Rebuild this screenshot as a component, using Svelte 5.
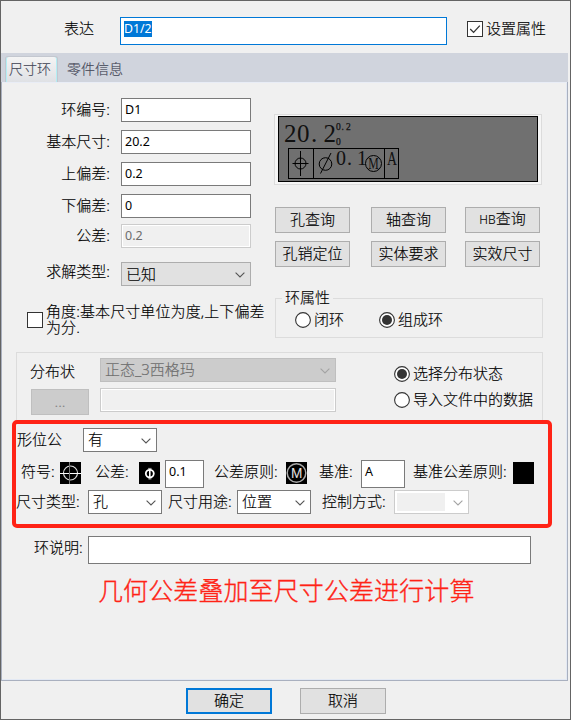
<script>
  const fields = [
    { label: '环编号:', value: 'D1', gap: 0 },
    { label: '基本尺寸:', value: '20.2', gap: 8 },
    { label: '上偏差:', value: '0.2', gap: 8 },
    { label: '下偏差:', value: '0', gap: 8 },
    { label: '公差:', value: '0.2', gap: 6, disabled: true }
  ];
  const actions = ['孔查询', '轴查询', 'HB查询', '孔销定位', '实体要求', '实效尺寸'];
</script>

{#snippet chevron()}
  <svg class="chev" width="10" height="6" viewBox="0 0 10 6"><path d="M0.6 0.6 L5 5 L9.4 0.6" fill="none" stroke="currentColor" stroke-width="1.1" /></svg>
{/snippet}

{#snippet radio(label, on)}
  <span class="radio">
    <svg width="16" height="16" viewBox="0 0 16 16">
      <circle cx="8" cy="8" r="7.4" fill="#fff" stroke="#333" stroke-width="1.1" />
      {#if on}<circle cx="8" cy="8" r="5" fill="#333" />{/if}
    </svg>
    <span>{label}</span>
  </span>
{/snippet}

<div class="window">
  <header class="top">
    <span class="expr">表达</span>
    <div class="input focus"><span class="sel">D1/2</span></div>
    <span class="check">
      <svg width="14" height="14" viewBox="0 0 14 14"><path d="M2.2 7 L5.6 10.4 L11.8 3.6" fill="none" stroke="#333" stroke-width="1.3" /></svg>
    </span>
    <span class="setattr">设置属性</span>
  </header>

  <nav class="tabs">
    <span class="tab active">尺寸环</span>
    <span class="tab">零件信息</span>
  </nav>

  <main class="panel">
    <div class="cols">
      <section class="left">
        {#each fields as f}
          <div class="field" style="margin-top:{f.gap}px">
            <span class="lbl">{f.label}</span>
            <div class="input" class:disabled={f.disabled}>{f.value}</div>
          </div>
        {/each}
        <div class="field solve">
          <span class="lbl">求解类型:</span>
          <div class="select gray">已知{@render chevron()}</div>
        </div>
        <div class="angle">
          <span class="check"></span>
          <span class="note">角度:基本尺寸单位为度,上下偏差<br />为分.</span>
        </div>
      </section>

      <section class="right">
        <div class="frame">
          <svg width="260" height="66" viewBox="278 116 260 66">
            <rect x="278.5" y="116.5" width="259" height="65" fill="#707070" stroke="#000" />
            <g class="cad">
              <text x="284 297 311 323.5" y="141.5" font-size="25">20.2</text>
              <text class="small" x="336 341.5 346" y="130" font-size="9.5">0.2</text>
              <text class="small" x="336" y="145" font-size="9.5">0</text>
              <text x="336 347 357" y="165" font-size="20">0.1</text>
              <text class="m" x="368.2" y="169" font-size="16" textLength="10.5" lengthAdjust="spacingAndGlyphs">M</text>
              <text x="387" y="165" font-size="19" textLength="10" lengthAdjust="spacingAndGlyphs">A</text>
            </g>
            <g fill="none" stroke="#000">
              <rect x="288.5" y="148.5" width="110" height="30" />
              <path d="M313.5 148V179M384.5 148V179M292.5 163.5H308.5M300.5 151V176M320.5 173.5L331 153" />
              <circle cx="300.5" cy="163.5" r="5.5" />
              <circle cx="325.5" cy="164" r="6.3" />
              <circle cx="373.5" cy="163.5" r="8" />
            </g>
          </svg>
        </div>
        <div class="actions">
          {#each actions as a}
            <button>{#if a.startsWith('HB')}<small>HB</small>{a.slice(2)}{:else}{a}{/if}</button>
          {/each}
        </div>
        <div class="ringattr">
          <span class="legend">环属性</span>
          {@render radio('闭环', false)}
          {@render radio('组成环', true)}
        </div>
      </section>
    </div>

    <section class="dist">
      <span class="dlabel">分布状</span>
      <div class="select off">正态_3西格玛{@render chevron()}</div>
      {@render radio('选择分布状态', true)}
      <button class="browse">...</button>
      <div class="input disabled"></div>
      {@render radio('导入文件中的数据', false)}
    </section>

    <section class="geo">
      <div class="row r1">
        <span class="w66">形位公</span>
        <div class="select">有{@render chevron()}</div>
      </div>
      <div class="row r2">
        <span class="w39">符号:</span>
        <svg class="ico" width="21" height="22" viewBox="0 0 21 22">
          <rect width="21" height="22" fill="#000" />
          <circle cx="10.5" cy="11" r="7" fill="none" stroke="#ddd" stroke-width="1.1" />
          <path d="M0 11.5H21" stroke="#fff" />
          <path d="M9.5 0V22" stroke="#777" />
        </svg>
        <span class="w43 ml15">公差:</span>
        <svg class="ico" width="21" height="22" viewBox="0 0 21 22">
          <rect width="21" height="22" fill="#000" />
          <ellipse cx="10.8" cy="11.6" rx="4" ry="3.8" fill="none" stroke="#fff" stroke-width="1.8" />
          <path d="M10.8 6V17.2" stroke="#fff" stroke-width="1.6" />
          <path d="M9 6.4H12.6M9 16.8H12.6" stroke="#999" />
        </svg>
        <div class="input v39">0.1</div>
        <span class="w71 ml11">公差原则:</span>
        <svg class="ico" width="21" height="22" viewBox="0 0 21 22">
          <rect width="21" height="22" fill="#000" />
          <circle cx="10.5" cy="11" r="9.3" fill="none" stroke="#aaa" stroke-width="1.5" />
          <text x="4.9" y="16.2" font-family="Liberation Sans" font-size="14" font-weight="400" fill="#e4e4e4" textLength="11.4" lengthAdjust="spacingAndGlyphs">M</text>
        </svg>
        <span class="w42 ml12">基准:</span>
        <div class="input v44">A</div>
        <span class="w100 ml8">基准公差原则:</span>
        <svg class="ico" width="21" height="22"><rect width="21" height="22" fill="#000" /></svg>
      </div>
      <div class="row r3">
        <span class="w72">尺寸类型:</span>
        <div class="select">孔{@render chevron()}</div>
        <span class="w69 ml6">尺寸用途:</span>
        <div class="select">位置{@render chevron()}</div>
        <span class="w72 ml11">控制方式:</span>
        <div class="select none"><i></i>{@render chevron()}</div>
      </div>
    </section>

    <div class="desc">
      <span>环说明:</span>
      <div class="input"></div>
    </div>
    <p class="caption">几何公差叠加至尺寸公差进行计算</p>
  </main>

  <footer>
    <button class="primary">确定</button>
    <button>取消</button>
  </footer>
</div>

<style>
  :global(body) { margin: 0; }
  .window, .window * { box-sizing: border-box; }
  .window {
    width: 571px; height: 720px; border: 1px solid #646464; background: #f0f0f0;
    font: 300 15px/16px 'Noto Sans', 'Noto Sans CJK SC', sans-serif; color: #000;
    -webkit-text-stroke: 0.15px currentColor;
    white-space: nowrap; overflow: hidden;
  }
  svg { display: block; flex: none; }
  .input, .select, button, .check { flex: none; }

  .input {
    height: 24px; border: 1px solid #7a7a7a; background: #fff; padding: 3px 3px;
    font: 400 12.5px/16px 'Noto Sans', sans-serif; -webkit-text-stroke: 0;
  }
  .input.disabled { border-color: #ccc; background: #f0f0f0; color: #6d6d6d; box-shadow: inset 0 0 0 1px #fff; }
  .select {
    height: 24px; width: 74px; border: 1px solid #7a7a7a; background: #fff; padding: 0 5px 3px 4px;
    display: flex; align-items: center; justify-content: space-between; color: #000;
  }
  .chev { color: #555; position: relative; top: 2px; }
  .select.gray { width: 130px; background: #e1e1e1; border-color: #adadad; padding-bottom: 1px; }
  .select.gray .chev { top: 1px; }
  .select.off { background: #ccc; border-color: #bfbfbf; color: #6d6d6d; padding-bottom: 2px; }
  .select.off .chev, .select.none .chev { color: #a3a3a3; }
  .select.none { width: 75px; border-color: #ccc; padding: 0 5px 0 2px; }
  .select.none i { width: 48px; height: 18px; background: #f0f0f0; }
  .select.none .chev { top: 1px; }
  button {
    font: inherit; color: #000; background: #e1e1e1; border: 1px solid #adadad; border-radius: 0;
    width: 75px; height: 26px; padding: 0 0 2px; margin: 0;
  }
  button small { font-size: 12px; }
  .check { width: 16px; height: 16px; border: 1px solid #333; background: #fff; }
  .radio { display: flex; align-items: center; gap: 3px; height: 16px; }
  .radio span { position: relative; top: -1px; }

  .top { height: 52px; display: flex; padding: 16px 0 0 63px; }
  .expr { width: 56px; padding-top: 3px; }
  .focus { width: 327px; height: 28px; border-color: #0078d7; }
  .sel { display: inline-block; background: #0078d7; color: #fff; font-size: 12.3px; line-height: 16px; }
  .top .check { margin: 4px 3px 0 20px; }
  .setattr { padding-top: 3px; }

  .tabs { height: 29px; width: 567px; background: #d0d4dd; display: flex; padding: 3px 0 0 4px; font-size: 14px; color: #464959; }
  .tab { padding: 5px 0 0 9px; }
  .tab.active {
    width: 53px; height: 26px; padding: 4px 0 0 3px; border: 1px solid #c3c7cf; border-bottom: 0;
    border-radius: 3px 3px 0 0; background: linear-gradient(#f4f4f4, #dfe1e5);
    box-shadow: inset 1px 0 #b4eef4, inset -1px 0 #b4eef4;
  }

  .panel {
    width: 567px; height: 599px; border: 1px solid #a9b0bf; border-top: 0; overflow: hidden;
    box-shadow: inset 0 1px #e9edf6, inset -1px -1px #e3e9f4;
  }
  .cols { display: flex; height: 270px; padding-left: 24px; }
  .left { flex: none; width: 248px; padding-top: 16px; }
  .field { display: flex; height: 24px; }
  .lbl { width: 84px; text-align: right; padding-top: 3px; margin-right: 11px; }
  .field .input { width: 130px; }
  .field.solve { margin-top: 14px; }
  .solve .lbl { padding-top: 1px; }
  .angle { display: flex; margin: 17px 0 0 1px; }
  .angle .check { margin: 9px 3px 0 0; }
  .note { letter-spacing: 0.1px; }

  .right { padding-top: 32px; }
  .frame { width: 268px; height: 71px; border: 1px solid #dcdcdc; padding: 1px 3px; background: #f6f6f6; }
  .cad { font-family: 'Liberation Serif', serif; font-weight: 400; fill: #111; }
  .small { stroke: #111; stroke-width: 0.25px; }
  .actions { display: grid; grid-template-columns: 96px 94px 75px; row-gap: 8px; margin: 22px 0 0 1px; }
  .ringattr {
    position: relative; display: flex; width: 268px; height: 40px; margin: 31px 0 0 1px;
    border: 1px solid #dcdcdc; padding: 13px 0 0 19px; gap: 35px;
  }
  .legend { position: absolute; left: 6px; top: -10px; padding: 0 3px; background: #f0f0f0; }

  .dist {
    display: grid; grid-template-columns: 69px 294px auto; grid-template-rows: 30px 30px;
    margin-left: 14px; width: 527px; height: 68px; padding: 5px 0 0 14px;
    border: 1px solid #dcdcdc; border-bottom: 0;
  }
  .dist .select, .dist .input { width: 236px; }
  .dlabel { padding-top: 5px; margin-left: -1px; }
  .dist .radio { margin-top: 8px; }
  .dist .browse + .input + .radio { margin-top: 4px; }
  .browse { width: 58px; margin-top: 1px; background: #ccc; border-color: #bfbfbf; color: #838383; }

  .geo { margin-left: 10px; width: 540px; height: 108px; border: 4px solid #ff2316; border-radius: 5px; padding-top: 4px; }
  .row { display: flex; }
  .row > span { flex: none; padding-top: 3px; }
  .r1 { height: 32px; padding-left: 1px; }
  .r2 { height: 30px; padding-left: 5px; }
  .r2 .input { height: 28px; }
  .ico { margin-top: 2px; }
  .w66 { width: 66px; } .w39 { width: 39px; } .w43 { width: 44px; } .w71 { width: 72px; }
  .w42 { width: 42px; } .w100 { width: 100px; } .w72 { width: 72px; } .w69 { width: 69px; }
  .ml15 { margin-left: 14px; } .ml11 { margin-left: 11px; } .row.r2 > .ml11 { margin-left: 10px; } .ml12 { margin-left: 12px; }
  .ml8 { margin-left: 8px; } .ml6 { margin-left: 6px; }
  .v39 { width: 39px; margin-left: 5px; } .v44 { width: 44px; }

  .desc { display: flex; margin: 8px 0 0 32px; }
  .desc span { width: 54px; padding-top: 3px; }
  .desc .input { width: 443px; height: 28px; }
  .caption { margin: 11px 0 0 96px; font-size: 25px; line-height: 30px; letter-spacing: 0.1px; color: #ff2316; -webkit-text-stroke: 0.35px #ff2316; }

  footer { display: flex; gap: 28px; padding: 7px 0 0 185px; }
  footer button { width: 86px; }
  .primary { border: 2px solid #0078d7; }
</style>
